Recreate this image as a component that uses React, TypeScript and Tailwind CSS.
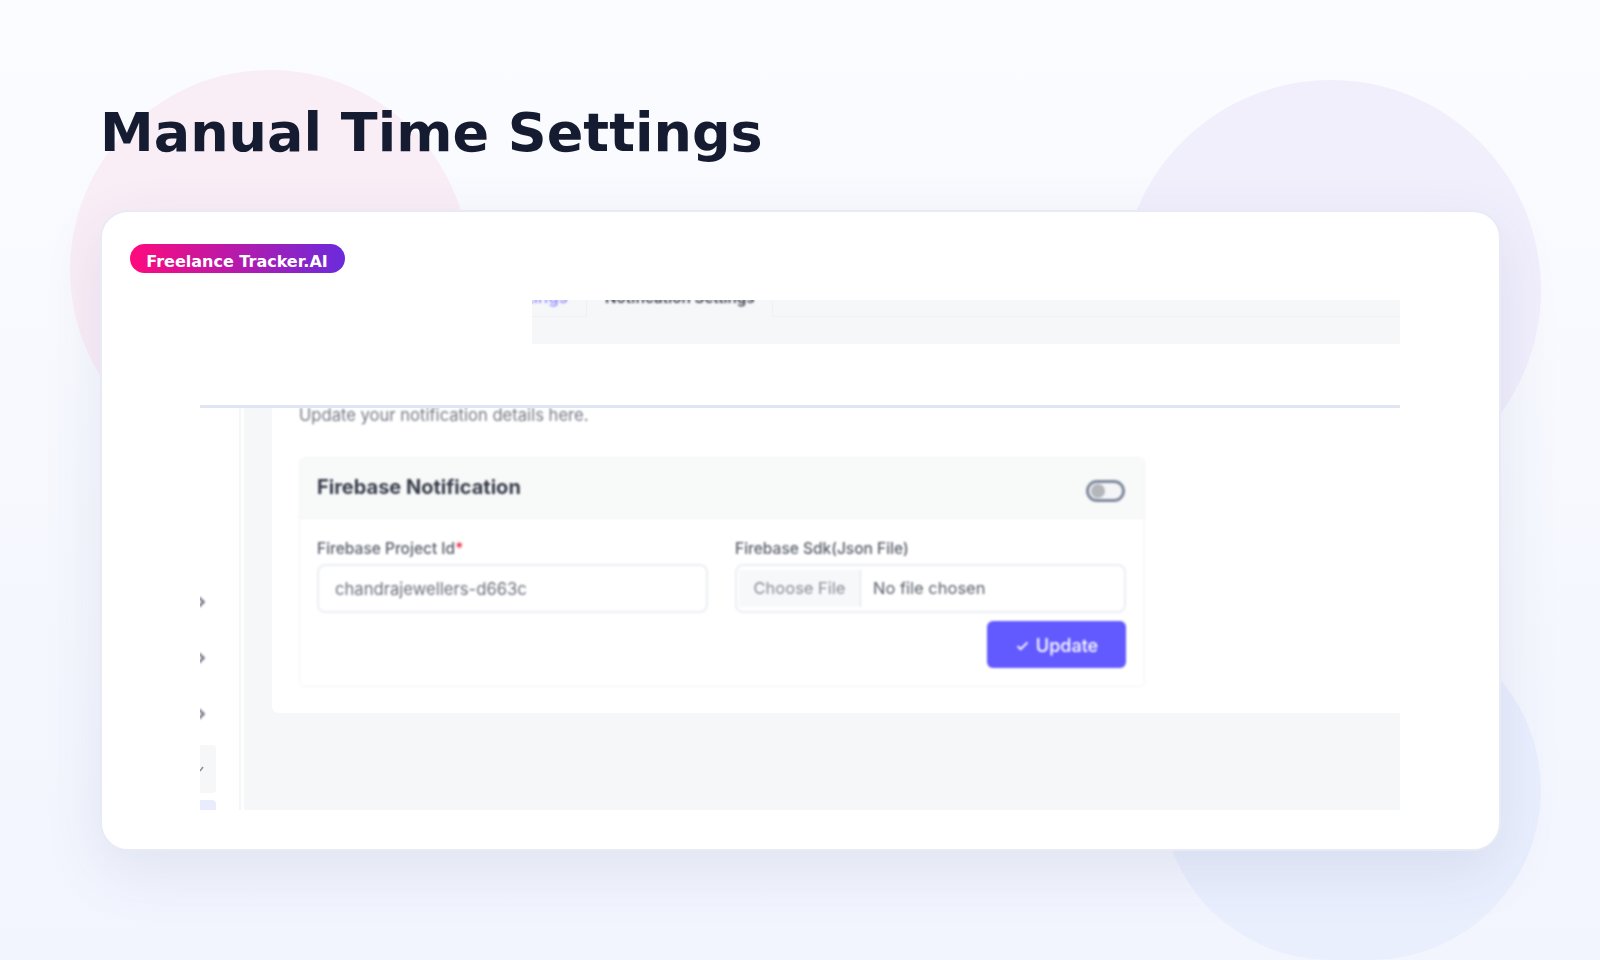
const sans = "font-['Inter','Liberation_Sans',sans-serif]";

function Chevron() {
  return (
    <div className="h-[56px] flex items-center overflow-hidden">
      <svg width="7" height="12" viewBox="0 0 7 12" className="-ml-[2px] blur-[0.8px]">
        <path d="M1 1.5l4.5 4.5-4.5 4.5" fill="none" stroke="#6b7080" strokeWidth="2.4" />
      </svg>
    </div>
  );
}

function Sidebar() {
  return (
    <div className="w-[44px] shrink-0 bg-white pt-[166px] overflow-hidden relative">
      <div className="absolute left-[39px] top-0 bottom-0 w-[2px] bg-[#f4f5f7] blur-[0.5px]" />
      <Chevron />
      <Chevron />
      <Chevron />
      <div className="mt-[3px] w-[16px] h-[48px] bg-[#f6f7f9] rounded-r-[4px] flex items-center blur-[0.5px]">
        <svg width="6" height="8" viewBox="0 0 6 8"><path d="M0 6l3-4" stroke="#8a8e9c" strokeWidth="1.6" fill="none" /></svg>
      </div>
      <div className="mt-[7px] w-[16px] h-[30px] bg-[#e9ecfd] rounded-r-[4px] blur-[0.5px]" />
    </div>
  );
}

function NotificationCard() {
  return (
    <div className="w-[846px] h-[230px] border border-[#f3f4f6] rounded-[6px] overflow-hidden bg-white">
      <div className="h-[61px] bg-[#f8f9f9] border-b border-[#f3f4f6] pl-[17px] pr-[19px] flex items-center justify-between">
        <span className="text-[20px] font-bold text-[#363c49] -mt-[2px]">Firebase Notification</span>
        <div className="mt-[5px] w-[39px] h-[22px] rounded-full border-[3px] border-[#7e889b] bg-[#f4f5f7] flex items-center pl-[2px]">
          <div className="w-[14px] h-[14px] rounded-full bg-[#b4b6bb]" />
        </div>
      </div>
      <div className="pl-[17px] pt-[20px] flex gap-[27px]">
        <div className="w-[391px]">
          <div className="text-[15.5px] leading-[20px] font-medium text-[#565c68]">
            Firebase Project Id<span className="text-[#f0213f]">*</span>
          </div>
          <div className="mt-[5px] h-[49px] border-2 border-[#eceef3] rounded-[8px] flex items-center pl-[16px] pt-[1px] text-[16.65px] text-[#6a6f7b]">
            chandrajewellers-d663c
          </div>
        </div>
        <div className="w-[391px]">
          <div className="text-[15.5px] leading-[20px] font-medium text-[#565c68]">Firebase Sdk(Json File)</div>
          <div className="mt-[5px] h-[49px] border-2 border-[#eceef3] rounded-[8px] flex items-stretch py-[4px] pl-[2px] text-[16.5px]">
            <div className="w-[122px] bg-[#f7f8fa] border-r border-[#dfe1e6] flex items-center justify-center text-[#858a95]">Choose File</div>
            <div className="pl-[12px] flex items-center text-[#565c68]">No file chosen</div>
          </div>
        </div>
      </div>
      <div className="flex justify-end pr-[18px] mt-[8px]">
        <div className="w-[139px] h-[47px] rounded-[6px] bg-[#6259ff] flex items-center justify-center gap-[6px] pt-[1px] text-white text-[18px] font-medium">
          <svg width="15" height="15" viewBox="0 0 24 24"><path d="M4 13l5 5L20 7" fill="none" stroke="#fff" strokeWidth="3" /></svg>
          Update
        </div>
      </div>
    </div>
  );
}

function Capture() {
  return (
    <div className={`w-[1200px] h-[510px] overflow-hidden flex flex-col bg-white ${sans}`}>
      <div className="h-[44px] ml-[332px] bg-[#f6f7f9] shrink-0 overflow-hidden">
        <div className="h-[17px] flex items-end">
          <div className="w-[55px] h-[17px] border-r border-b border-[#f0f1f4] relative overflow-hidden">
            <span className="absolute right-[18px] -top-[15px] text-[17px] font-medium text-[#8f8aff] whitespace-nowrap blur-[0.8px]">Settings</span>
          </div>
          <div className="w-[185px] h-[17px] relative overflow-hidden">
            <span className="absolute left-[18px] -top-[13px] text-[15.2px] font-semibold text-[#3a3f4b] whitespace-nowrap blur-[0.8px]">Notification Settings</span>
          </div>
          <div className="flex-1 h-[17px] border-l border-b border-[#f0f1f4]" />
        </div>
      </div>
      <div className="h-[61px] shrink-0 bg-white" />
      <div className="h-[3px] shrink-0 bg-[#e0e5f5]" />
      <div className="flex-1 flex min-h-0">
        <Sidebar />
        <div className="flex-1 bg-[#f6f7f9] pl-[28px] min-w-0 overflow-hidden">
          <div className="w-[1200px] h-[305px] bg-white rounded-bl-[6px] pl-[27px]">
            <div className="h-[49px] text-[16.6px] leading-[14px] text-[#757a85] blur-[0.9px]">Update your notification details here.</div>
            <div className="blur-[0.9px]"><NotificationCard /></div>
          </div>
        </div>
      </div>
    </div>
  );
}

export default function App() {
  return (
    <div className="relative w-[1600px] h-[960px] overflow-hidden bg-gradient-to-b from-[#fbfcff] to-[#f2f5fe] font-['DejaVu_Sans',sans-serif]">
      <div className="absolute left-[70px] top-[70px] w-[400px] h-[400px] rounded-full bg-[#f9edf6]" />
      <div className="absolute right-[59px] top-[80px] w-[420px] h-[420px] rounded-full bg-[#f1effc]" />
      <div className="absolute right-[59px] top-[620px] w-[380px] h-[340px] rounded-full bg-[#e9effd]" />
      <div className="relative pl-[100px] pr-[99px] pt-[97px]">
        <h1 className="text-[54px] leading-[72px] font-bold text-[#151b30] m-0">Manual Time Settings</h1>
        <div className="mt-[41px] h-[641px] rounded-[28px] bg-white border-2 border-[#e8eaf6] shadow-[0_20px_60px_rgba(60,70,130,0.10)] flex flex-col">
          <div className="pt-[32px] pl-[28px] h-[88px] shrink-0">
            <div className="w-[215px] h-[29px] pt-[6px] pr-[1px] rounded-full bg-linear-to-r/srgb from-[#ff0a7c] to-[#6a2bdc] flex items-center justify-center text-white text-[16px] font-bold">
              Freelance Tracker.AI
            </div>
          </div>
          <div className="ml-[98px]"><Capture /></div>
        </div>
      </div>
    </div>
  );
}
